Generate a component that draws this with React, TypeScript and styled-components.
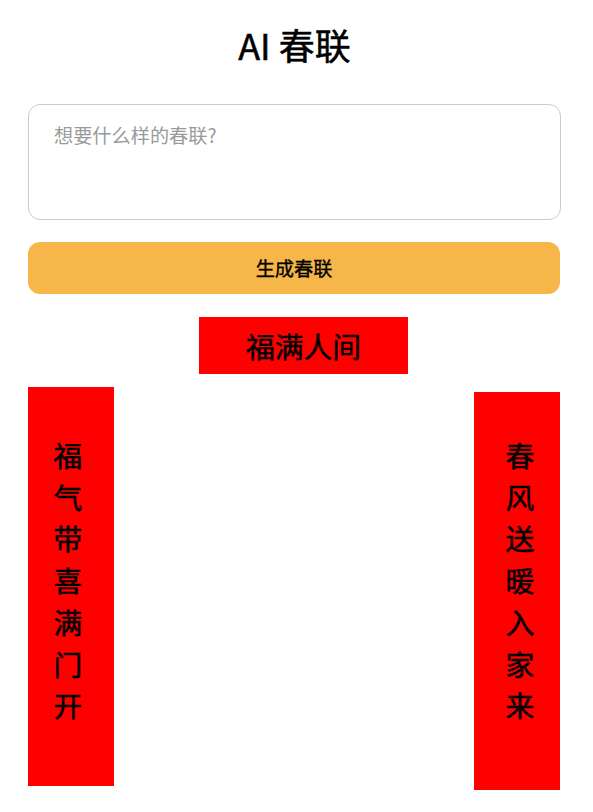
import styled, { createGlobalStyle } from 'styled-components';

const GlobalStyle = createGlobalStyle`
	html, body {
		margin: 0;
		padding: 0;
		background: #ffffff;
	}
	body {
		font-family: 'Noto Sans CJK SC', 'Noto Sans', sans-serif;
		color: #000000;
	}
	* {
		box-sizing: border-box;
	}
`;

const App = () => {
	return (
		<>
			<GlobalStyle />
			<Wrapper>
				<Title>AI 春联</Title>
				<Prompt placeholder="想要什么样的春联?" />
				<GenerateButton type="button">生成春联</GenerateButton>
				<Horizontal>福满人间</Horizontal>
				<CoupletRow>
					<Couplet $offset={0} $pad={47} $height={399} $shift={-3}>
						{'福气带喜满门开'.split('').map((c, i) => (
							<Char key={i}>{c}</Char>
						))}
					</Couplet>
					<Couplet $offset={5} $pad={42} $height={398} $shift={3}>
						{'春风送暖入家来'.split('').map((c, i) => (
							<Char key={i}>{c}</Char>
						))}
					</Couplet>
				</CoupletRow>
			</Wrapper>
		</>
	);
};

export default App;

const Wrapper = styled.div`
	width: 533px;
	margin-left: 28px;
	padding-top: 18px;
	display: flex;
	flex-direction: column;
`;

const Title = styled.h1`
	margin: 0 0 34px;
	font-size: 36px;
	font-weight: 400;
	line-height: 52px;
	text-align: center;
	-webkit-text-stroke: 0.5px #000000;
`;

const Prompt = styled.textarea`
	display: block;
	width: 533px;
	height: 116px;
	padding: 16px 25px;
	border: 1px solid #cccccc;
	border-radius: 12px;
	font-family: 'Noto Sans CJK SC', 'Noto Sans', sans-serif;
	font-size: 19.2px;
	resize: none;
	outline: none;
	margin-bottom: 22px;

	&::placeholder {
		color: #9a9a9a;
	}
`;

const GenerateButton = styled.button`
	width: 532px;
	height: 52px;
	border: none;
	border-radius: 12px;
	background: #f6b64a;
	color: #000000;
	font-family: 'Noto Sans CJK SC', 'Noto Sans', sans-serif;
	font-size: 19.2px;
	font-weight: 400;
	-webkit-text-stroke: 0.35px #000000;
	margin-bottom: 23px;
	cursor: pointer;
`;

const Horizontal = styled.div`
	align-self: flex-start;
	margin-left: 171px;
	width: 209px;
	height: 57px;
	background: #ff0000;
	font-size: 28.8px;
	font-weight: 400;
	-webkit-text-stroke: 0.5px #000000;
	display: flex;
	align-items: center;
	justify-content: center;
	margin-bottom: 13px;
`;

const CoupletRow = styled.div`
	display: flex;
	justify-content: space-between;
	align-items: flex-start;
	width: 532px;
`;

const Couplet = styled.div<{
	$offset: number;
	$pad: number;
	$height: number;
	$shift: number;
}>`
	width: 86px;
	height: ${(p) => p.$height}px;
	margin-top: ${(p) => p.$offset}px;
	padding-top: ${(p) => p.$pad}px;
	padding-left: ${(p) => (p.$shift > 0 ? p.$shift * 2 : 0)}px;
	padding-right: ${(p) => (p.$shift < 0 ? -p.$shift * 2 : 0)}px;
	background: #ff0000;
	display: flex;
	flex-direction: column;
	align-items: center;
`;

const Char = styled.span`
	font-size: 28.8px;
	font-weight: 400;
	line-height: 41.7px;
	-webkit-text-stroke: 0.5px #000000;
`;
